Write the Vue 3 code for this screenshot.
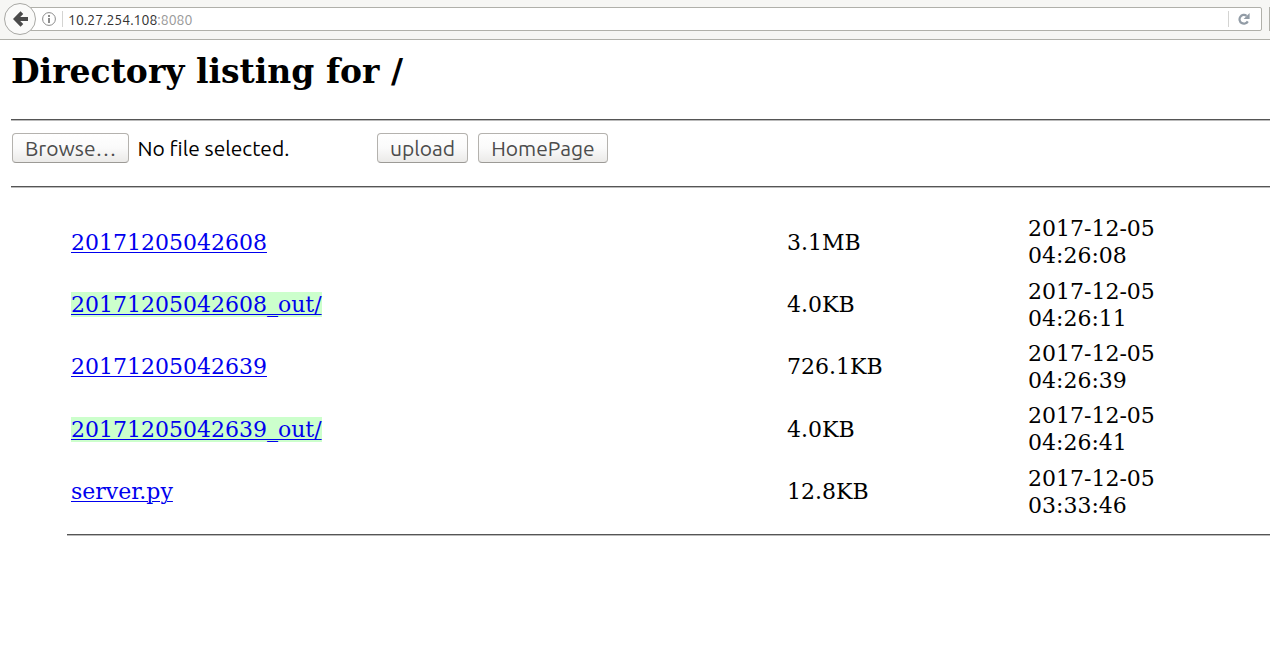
<script setup>
import { ref } from 'vue'

const picker = ref(null)
const fileName = ref('No file selected.')
const address = ref('10.27.254.108:8080')

const files = [
  { name: '20171205042608', size: '3.1MB', date: '2017-12-05 04:26:08' },
  { name: '20171205042608_out/', size: '4.0KB', date: '2017-12-05 04:26:11', dir: true },
  { name: '20171205042639', size: '726.1KB', date: '2017-12-05 04:26:39' },
  { name: '20171205042639_out/', size: '4.0KB', date: '2017-12-05 04:26:41', dir: true },
  { name: 'server.py', size: '12.8KB', date: '2017-12-05 03:33:46' },
]

function onPick(event) {
  const file = event.target.files[0]
  fileName.value = file ? file.name : 'No file selected.'
}
</script>

<template>
  <header class="toolbar">
    <button class="back" type="button" aria-label="Back">
      <svg width="16" height="16" viewBox="0 0 16 16">
        <path d="M8.9 1.6 2.6 8l6.3 6.4M3.5 8H15" fill="none" stroke="#4a4a4a" stroke-width="3.8" />
      </svg>
    </button>
    <div class="urlbar">
      <button class="info" type="button" aria-label="Site information">
        <svg width="14" height="14" viewBox="0 0 14 14">
          <circle cx="7" cy="7" r="6.4" fill="none" stroke="#8b8b8b" stroke-width="1" />
          <path d="M6 3h2v2H6zM6 6h2v5H6z" fill="#8b8b8b" />
        </svg>
      </button>
      <div class="address" role="textbox" aria-label="Address" contenteditable="true" spellcheck="false">{{ address.split(':')[0] }}<span class="port">:{{ address.split(':')[1] }}</span></div>
      <button class="reload" type="button" aria-label="Reload">
        <svg width="12" height="12" viewBox="0 0 12 12">
          <path d="M9.8 8.4A4.4 4.4 0 1 1 8.6 2.8" fill="none" stroke="#929ca6" stroke-width="2.2" />
          <path d="M11.6 0v6H5.6z" fill="#929ca6" />
        </svg>
      </button>
    </div>
    <div class="next-field"></div>
  </header>

  <main class="page">
    <h1>Directory listing for /</h1>
    <hr />
    <form class="upload" @submit.prevent>
      <div class="picker">
        <button class="btn" type="button" @click="picker.click()">Browse…</button>
        <label for="file">{{ fileName }}</label>
        <input id="file" ref="picker" type="file" hidden @change="onPick" />
      </div>
      <button class="btn" type="submit">upload</button>
      <button class="btn" type="button">HomePage</button>
    </form>
    <hr />
    <div class="listing">
      <table>
        <colgroup>
          <col class="col-name" />
          <col class="col-size" />
          <col />
        </colgroup>
        <tbody>
          <tr v-for="file in files" :key="file.name">
            <td><a :href="'#' + file.name" :class="{ dir: file.dir }">{{ file.name }}</a></td>
            <td>{{ file.size }}</td>
            <td class="date">{{ file.date }}</td>
          </tr>
        </tbody>
      </table>
      <hr />
    </div>
  </main>
</template>

<style>
body {
  margin: 0;
  background: #fff;
}
</style>

<style scoped>
* {
  box-sizing: border-box;
}

.toolbar {
  display: flex;
  align-items: center;
  height: 40px;
  padding: 0 0 2px 4px;
  background: #f6f6f4;
  border-bottom: 1px solid #b0b0aa;
}

.back {
  z-index: 1;
  display: flex;
  align-items: center;
  justify-content: center;
  flex: none;
  width: 32px;
  height: 32px;
  padding: 0 0 0 2px;
  border: 1px solid #a8a8a4;
  border-radius: 50%;
  background: #fafaf9;
}

.urlbar {
  display: flex;
  flex: 1;
  align-items: center;
  height: 24px;
  margin-left: -6px;
  padding-left: 11px;
  border: 1px solid #b0b0aa;
  border-radius: 0 2px 2px 0;
  background: #fff;
}

.info,
.reload {
  display: flex;
  align-items: center;
  justify-content: center;
  height: 16px;
  padding: 0;
  border: 0;
  background: none;
}

.info {
  width: 21px;
  padding-right: 6px;
  border-right: 1px solid #d4d4d2;
}

.info svg {
  flex: none;
}

.reload {
  width: 33px;
  padding-right: 2px;
  border-left: 1px solid #d4d4d2;
}

.address {
  flex: 1;
  padding: 2px 0 0 5px;
  color: #333;
  font: 14px/20px Ubuntu, "Noto Sans", sans-serif;
  outline: none;
}

.port {
  color: #999;
}

.next-field {
  width: 1px;
  height: 24px;
  margin-left: 7px;
  background: #b0b0aa;
}

.page {
  padding: 12px 0 0 11px;
  color: #000;
  font: 22px/27px "DejaVu Serif", serif;
}

h1 {
  margin: 0 0 27px;
  font-size: 33px;
  line-height: 40px;
}

hr {
  height: 2px;
  margin: 0;
  border: 0;
  border-top: 1px solid #555;
  background: #bbb;
}

.upload {
  display: flex;
  align-items: center;
  gap: 10px;
  padding: 12px 0 23px 1px;
  font: 21px/26px Ubuntu, "Noto Sans", sans-serif;
}

.picker {
  display: flex;
  align-items: center;
  gap: 8px;
  width: 355px;
}

.btn {
  height: 30px;
  padding: 0 12px;
  border: 1px solid #b4b2ae;
  border-bottom-color: #9c9a96;
  border-radius: 4px;
  background: linear-gradient(#fff, #fafafa 50%, #ebeae8);
  color: #4c4c4c;
  font: inherit;
}

.listing {
  padding: 23px 0 0 56px;
}

table {
  width: 100%;
  height: 312px;
  margin-bottom: 11px;
  table-layout: fixed;
  border-collapse: collapse;
}

.col-name {
  width: 716px;
}

.col-size {
  width: 241px;
}

td {
  padding: 0 4px;
  vertical-align: middle;
}

.date {
  padding-right: 48px;
}

a {
  color: #00e;
  text-decoration-thickness: 1px;
  text-underline-offset: 2px;
}

.dir {
  background: #cfc;
}
</style>
